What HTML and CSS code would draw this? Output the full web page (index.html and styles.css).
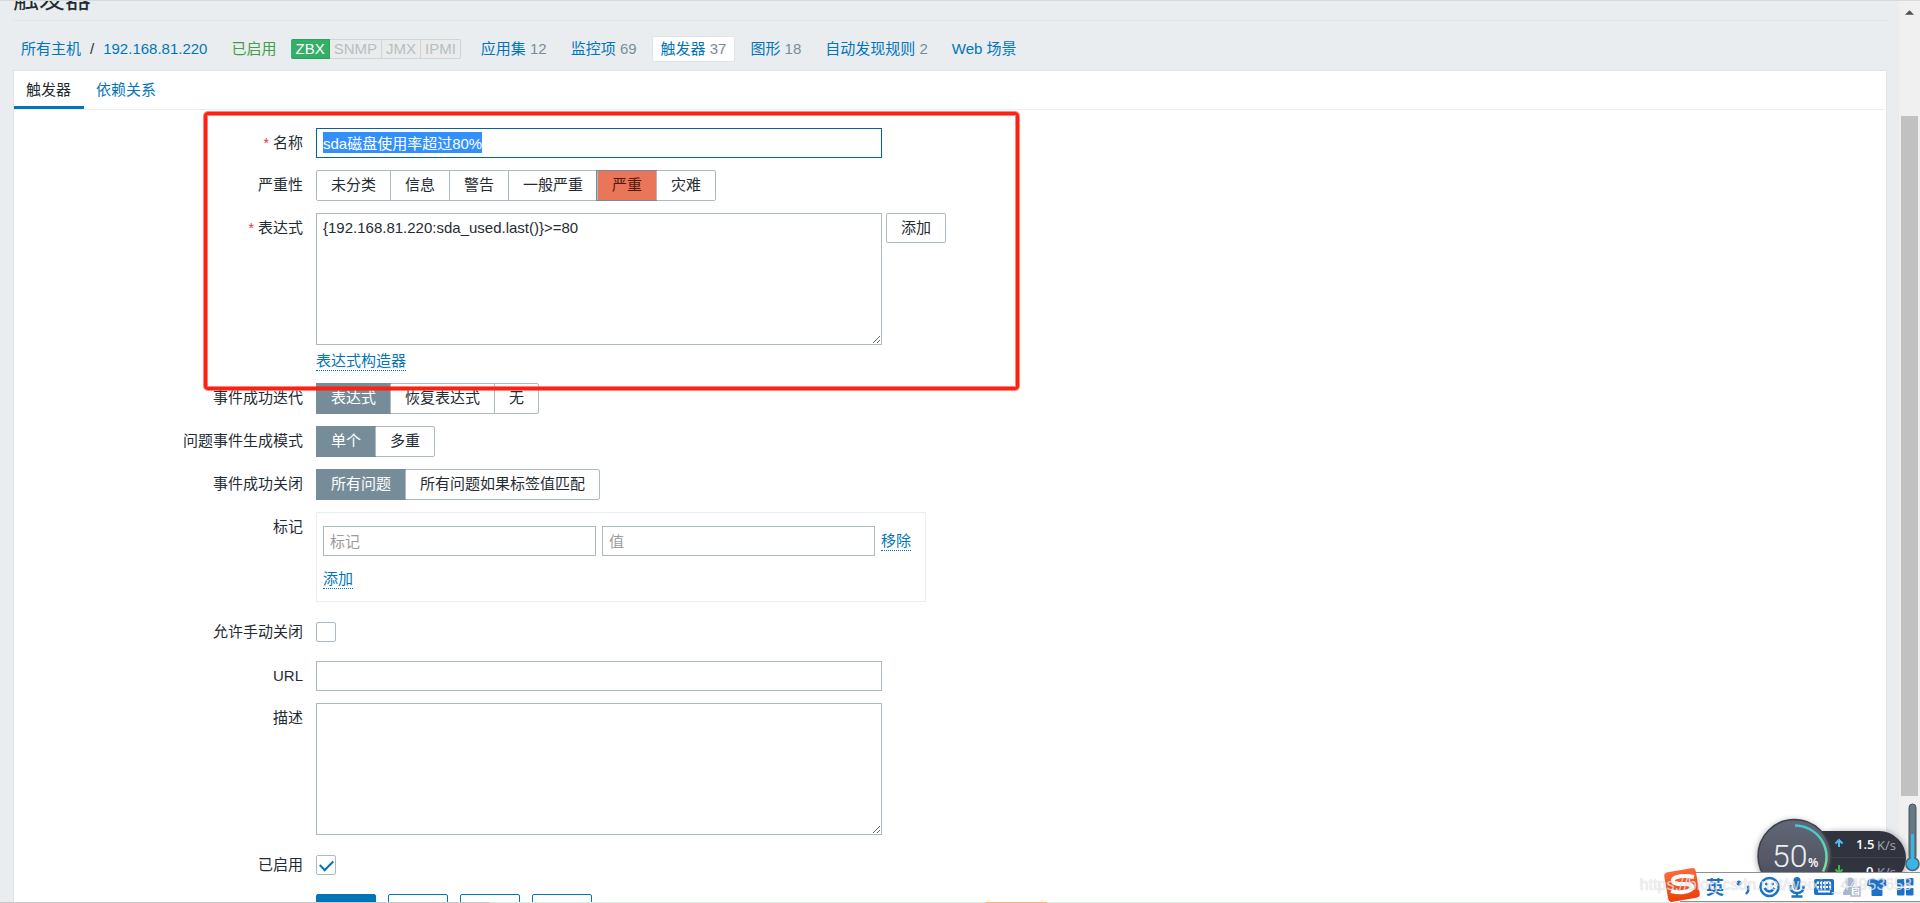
FILE: index.html
```html
<!DOCTYPE html>
<html lang="zh-CN">
<head>
<meta charset="utf-8">
<title>触发器</title>
<link rel="stylesheet" href="styles.css">
</head>
<body>
<div class="page">
  <header class="title-bar"><h1>触发器</h1></header>

  <nav class="host-nav">
    <div class="crumbs"><a href="#">所有主机</a><span>/</span><a href="#">192.168.81.220</a></div>
    <span class="status-on">已启用</span>
    <div class="interfaces"><span class="iface iface-on">ZBX</span><span class="iface">SNMP</span><span class="iface">JMX</span><span class="iface">IPMI</span></div>
    <div class="sections">
      <a class="section" href="#">应用集 <span>12</span></a>
      <a class="section" href="#">监控项 <span>69</span></a>
      <a class="section section-current" href="#">触发器 <span>37</span></a>
      <a class="section" href="#">图形 <span>18</span></a>
      <a class="section" href="#">自动发现规则 <span>2</span></a>
      <a class="section" href="#">Web 场景</a>
    </div>
  </nav>

  <main class="panel">
    <div class="tabs"><a class="tab tab-current" href="#">触发器</a><a class="tab" href="#">依赖关系</a></div>

    <form class="form">
      <div class="row">
        <label class="label" for="name"><span class="req">*</span> 名称</label>
        <input class="text wide name" id="name" type="text" value="sda磁盘使用率超过80%">
      </div>
      <div class="row">
        <span class="label">严重性</span>
        <div class="seg">
          <label class="opt"><input type="radio" name="severity">未分类</label>
          <label class="opt"><input type="radio" name="severity">信息</label>
          <label class="opt"><input type="radio" name="severity">警告</label>
          <label class="opt"><input type="radio" name="severity">一般严重</label>
          <label class="opt opt-high"><input type="radio" name="severity" checked>严重</label>
          <label class="opt"><input type="radio" name="severity">灾难</label>
        </div>
      </div>
      <div class="row">
        <label class="label" for="expression"><span class="req">*</span> 表达式</label>
        <div class="stack">
          <div class="field-line">
            <textarea class="text area wide" id="expression">{192.168.81.220:sda_used.last()}&gt;=80</textarea>
            <button class="btn" type="button">添加</button>
          </div>
          <button class="link" type="button">表达式构造器</button>
        </div>
      </div>
      <div class="row">
        <span class="label">事件成功迭代</span>
        <div class="seg">
          <label class="opt"><input type="radio" name="recovery" checked>表达式</label>
          <label class="opt"><input type="radio" name="recovery">恢复表达式</label>
          <label class="opt"><input type="radio" name="recovery">无</label>
        </div>
      </div>
      <div class="row">
        <span class="label">问题事件生成模式</span>
        <div class="seg">
          <label class="opt"><input type="radio" name="mode" checked>单个</label>
          <label class="opt"><input type="radio" name="mode">多重</label>
        </div>
      </div>
      <div class="row">
        <span class="label">事件成功关闭</span>
        <div class="seg">
          <label class="opt"><input type="radio" name="close" checked>所有问题</label>
          <label class="opt"><input type="radio" name="close">所有问题如果标签值匹配</label>
        </div>
      </div>
      <div class="row">
        <span class="label">标记</span>
        <div class="tags">
          <div class="tag-line">
            <input class="text tag" type="text" placeholder="标记" aria-label="标记">
            <input class="text tag" type="text" placeholder="值" aria-label="值">
            <button class="link" type="button">移除</button>
          </div>
          <button class="link" type="button">添加</button>
        </div>
      </div>
      <div class="row row-check">
        <label class="label" for="manual">允许手动关闭</label>
        <input class="check" id="manual" type="checkbox">
      </div>
      <div class="row">
        <label class="label" for="url">URL</label>
        <input class="text wide" id="url" type="text">
      </div>
      <div class="row">
        <label class="label" for="description">描述</label>
        <textarea class="text area wide" id="description"></textarea>
      </div>
      <div class="row row-check">
        <label class="label" for="enabled">已启用</label>
        <input class="check" id="enabled" type="checkbox" checked>
      </div>
      <div class="row">
        <span class="label"></span>
        <div class="actions">
          <button class="btn act act-main" type="button">更新</button>
          <button class="btn act" type="button">克隆</button>
          <button class="btn act" type="button">删除</button>
          <button class="btn act" type="button">取消</button>
        </div>
      </div>
    </form>
  </main>
</div>

<div class="scrollbar">
  <svg class="scroll-arrow" viewBox="0 0 10 5"><path d="M5 0 10 5H0z"/></svg>
  <div class="thumb"></div>
</div>

<div class="frame"></div>

<svg class="monitor" viewBox="0 0 180 83" role="img" aria-label="50%">
  <defs>
    <linearGradient id="ball" x1="0" y1="0" x2="0" y2="1"><stop offset="0" stop-color="#626777"/><stop offset="1" stop-color="#484c59"/></linearGradient>
    <linearGradient id="arc" x1="0" y1="0" x2="0" y2="1"><stop offset="0" stop-color="#3fc9d6"/><stop offset="1" stop-color="#7fe38c"/></linearGradient>
    <filter id="soft" x="-20%" y="-20%" width="140%" height="140%"><feGaussianBlur stdDeviation="3"/></filter>
  </defs>
  <circle cx="54" cy="57" r="37" fill="#000" opacity=".35" filter="url(#soft)"/>
  <rect x="70" y="31" width="97" height="54" rx="27" fill="#000" opacity=".3" filter="url(#soft)"/>
  <path d="M60 31h79a27 27 0 0 1 0 54H60z" fill="#31343f"/>
  <path d="M80 57.500h86" stroke="#3e424e"/>
  <circle cx="54.500" cy="56" r="36.500" fill="url(#ball)" stroke="#3d404a" stroke-width="1.500"/>
  <path d="M55 25.500a31.500 31.500 0 0 1 28 46" fill="none" stroke="url(#arc)" stroke-width="2.500"/>
  <text x="32" y="67" class="m-big">50</text><text x="68" y="67" class="m-pct">%</text>
  <path d="M99 47v-7M95.500 43.500l3.500-3.500 3.500 3.500" fill="none" stroke="#52b9f2" stroke-width="2"/>
  <path d="M99 65v8M95.500 69.500l3.500 3.500 3.500-3.500" fill="none" stroke="#3cb648" stroke-width="2"/>
  <text x="116" y="49" class="m-num">1.5</text><text x="137" y="50" class="m-unit">K/s</text>
  <text x="126" y="76" class="m-num">0</text><text x="137" y="77" class="m-unit">K/s</text>
  <rect x="169" y="4" width="7" height="56" rx="3.500" fill="#667983" stroke="#44545c"/>
  <circle cx="172.500" cy="64" r="6.500" fill="#35b6e8" stroke="#4d6672" stroke-width="1.500"/>
  <path d="M172.500 34v28" stroke="#35b6e8" stroke-width="3"/>
</svg>

<div class="ime">
  <svg class="ime-icons" viewBox="0 0 256 37">
    <defs><linearGradient id="tile" x1="0" y1="0" x2="0" y2="1"><stop offset="0" stop-color="#fb6a3c"/><stop offset="1" stop-color="#ee3f0a"/></linearGradient></defs>
    <rect x="2" y="5" width="32" height="30" rx="4" fill="url(#tile)" transform="rotate(-10 18 20)"/>
    <path d="M30 12c-9-2-20-1-21 3s5 4 11 4 9 1 8 4-11 6-21 3" fill="none" stroke="#fff" stroke-width="4"/>
    <text x="42" y="29" class="ime-zh">英</text>
    <circle cx="75" cy="18" r="2.500" fill="#1b72c9"/>
    <path d="M83.500 21q3 3-1.500 8" fill="none" stroke="#1b72c9" stroke-width="2.500"/>
    <g fill="none" stroke="#1b72c9" stroke-width="2.500">
      <circle cx="105.500" cy="22" r="9"/><path d="M100.500 23q5 7 10 0"/>
      <path d="M126.500 20v2q0 6 6.500 6t6.500-6v-2M133 28v4M127.500 31.500h11"/>
    </g>
    <g fill="#1b72c9">
      <circle cx="102.500" cy="19" r="1.500"/><circle cx="108.500" cy="19" r="1.500"/>
      <rect x="129.500" y="12" width="7" height="13" rx="3.500"/>
      <rect x="150" y="14" width="20" height="16" rx="2"/>
      <path d="M209 13q4 4 8 0l5 2 1 5.500-4.500 1.500v8q0 1-1 1h-9q-1 0-1-1v-8L203 20.500 204 15z"/>
      <rect x="233" y="14" width="7.500" height="7.500" rx="1"/><rect x="242" y="13" width="7.500" height="7.500" rx="1"/><rect x="233" y="23" width="7.500" height="7.500" rx="1"/><rect x="242" y="23" width="7.500" height="7.500" rx="1"/>
    </g>
    <path d="M153 18h14M153 22h14" stroke="#fff" stroke-width="2" stroke-dasharray="2 1"/><path d="M154 26.500h12" stroke="#fff" stroke-width="2"/>
    <g fill="#a9b6d3"><circle cx="186" cy="17" r="4.500"/><path d="M179 30q0-8 7-8t7 8z"/></g>
    <rect x="187" y="22" width="9" height="9" fill="#fff" stroke="#a9b6d3" stroke-width="1.500"/><path d="M189 24.500h5v2h-4v2.500h4" fill="none" stroke="#a9b6d3"/>
  </svg>
</div>
<div class="watermark">https://blog.csdn.net/weixin_44953658</div>
<div class="edge"></div>

<script src="script.js"></script>
</body>
</html>
```
FILE: styles.css
```css
* { box-sizing: border-box; }

html, body { height: 100%; }

body {
  margin: 0;
  overflow: hidden;
  position: relative;
  background: #e9edf0;
  border-top: 1px solid #d5dade;
  color: #1f2c33;
  font: 15px/20px "Liberation Sans", "Noto Sans CJK SC", sans-serif;
  display: flex;
}

input, textarea, button { font: inherit; color: inherit; margin: 0; }

a { color: #0275b8; text-decoration: none; }

.page {
  flex: 1;
  min-width: 0;
  padding: 0 12px 0 13px;
}

/* header */
.title-bar {
  height: 20px;
  padding-bottom: 6px;
  border-bottom: 1px solid #dfe4e7;
  overflow: hidden;
  display: flex;
  align-items: flex-end;
}
.title-bar h1 { margin: 0; font-size: 26px; font-weight: 400; line-height: 30px; }

.host-nav {
  display: flex;
  align-items: center;
  height: 49px;
  padding: 7px 0 0 8px;
}
.crumbs { display: flex; gap: 9px; }
.status-on { margin: 0 15px 0 24px; color: #429e47; }

.interfaces { display: flex; line-height: 18px; }
.iface {
  padding: 0 4px;
  border: 1px solid #ccd5d9;
  border-left: 0;
  background: #ebebeb;
  color: #b4bfc5;
}
.iface:last-child { border-radius: 0 2px 2px 0; }
.iface-on {
  background: #34af67;
  border-color: #2f9f5e;
  color: #fff;
  border-radius: 2px 0 0 2px;
}

.sections { display: flex; margin-left: 11px; gap: 6px; }
.section { padding: 2px 8px; border: 1px solid transparent; border-radius: 2px; }
.section span { color: #768d99; }
.section-current { background: #fff; border-color: #dfe4e7; }

/* panel */
.panel {
  background: #fff;
  border: 1px solid #dfe4e7;
}
.tabs {
  display: flex;
  margin-right: 1px;
  border-bottom: 1px solid #ebeef0;
}
.tab { padding: 9px 13px 6px 12px; border-bottom: 3px solid transparent; }
.tab-current { color: #1f2c33; border-color: #0275b8; }

.form {
  display: flex;
  flex-direction: column;
  gap: 12px;
  padding: 18px 0 0;
}
.row { display: flex; align-items: flex-start; }
.row-check { align-items: center; height: 35px; padding-top: 1px; }
.label {
  width: 289px;
  margin-right: 13px;
  text-align: right;
  line-height: 30px;
  flex: none;
}
.req { color: #e33734; font-size: 14px; }

.text {
  height: 30px;
  padding: 0 6px;
  border: 1px solid #acbbc2;
  border-radius: 0;
  background: #fff;
  outline: none;
  display: block;
}
.wide { width: 566px; }
.name { padding-bottom: 1px; }
.name:focus { border-color: #0064a0; }
.name::selection { background: rgba(48, 142, 254, .99); color: #fff; }
.area { height: 132px; padding: 4px 6px; resize: both; line-height: 20px; }
.text::placeholder { color: #9b9b9b; opacity: 1; }

.seg {
  display: flex;
  border: 1px solid #acbbc2;
  border-radius: 2px;
}
.opt {
  position: relative;
  padding: 0 14px 2px;
  line-height: 27px;
}
.opt + .opt { border-left: 1px solid #acbbc2; }
.opt input { position: absolute; opacity: 0; }
.opt:has(:checked) { background: #768d99; color: #fff; box-shadow: 0 0 0 1px #768d99; }
.opt-high:has(:checked) { background: #e97659; color: #52190b; }

.stack { display: flex; flex-direction: column; align-items: flex-start; gap: 6px; }
.field-line { display: flex; align-items: flex-start; gap: 4px; }

.btn {
  width: 60px;
  height: 30px;
  padding: 0;
  background: #fff;
  border: 1px solid #acbbc2;
  border-radius: 2px;
}
.link {
  padding: 0;
  border: 0;
  border-bottom: 1px dotted #0275b8;
  background: none;
  color: #0275b8;
  line-height: 19px;
}

.tags {
  display: flex;
  flex-direction: column;
  align-items: flex-start;
  gap: 13px;
  width: 610px;
  padding: 13px 6px 12px;
  border: 1px solid #ebeef0;
}
.tag-line { display: flex; align-items: center; gap: 6px; }
.tag { width: 273px; }

.check {
  appearance: none;
  width: 20px;
  height: 20px;
  border: 1px solid #acbbc2;
  border-radius: 2px;
  background: #fff;
  display: grid;
  place-items: center;
}
.check:checked::before {
  content: "";
  width: 11px;
  height: 6px;
  margin-bottom: 3px;
  border: solid #0275b8;
  border-width: 0 0 2px 2px;
  transform: rotate(-45deg);
}

.actions { display: flex; gap: 12px; }
.act { height: 34px; padding-top: 4px; border-color: #0275b8; color: #0275b8; }
.act-main { background: #0275b8; color: #fff; }

/* scrollbar */
.scrollbar {
  width: 21px;
  flex: none;
  padding: 9px 2px 107px;
  background: #f0f0f0;
  display: flex;
  flex-direction: column;
  align-items: center;
  gap: 101px;
}
.scroll-arrow { width: 9px; height: 5px; fill: #505050; flex: none; }
.thumb { width: 17px; flex: 1; background: #c1c1c1; }

/* overlays */
.frame {
  position: absolute;
  left: 204px;
  top: 111px;
  width: 815px;
  height: 278px;
  border: 3px solid #ff2012;
  border-radius: 4px;
  box-shadow: 0 0 0 1px rgba(255, 32, 18, .55), inset 0 0 0 1px rgba(255, 32, 18, .55);
}
.monitor { position: absolute; right: 0; bottom: 20px; width: 180px; height: 83px; }
.monitor text { font-family: "Open Sans", sans-serif; fill: #fff; }
.monitor .m-big { font-family: Roboto, sans-serif; font-size: 32px; font-weight: 300; fill: #eceef2; }
.monitor .m-pct { font-size: 12px; font-weight: 600; }
.monitor .m-num { font-size: 13px; font-weight: 600; }
.monitor .m-unit { font-size: 13px; fill: #a9abb3; }

.ime {
  position: absolute;
  right: 0;
  bottom: 1px;
  width: 240px;
  height: 30px;
  background: #fff;
  border: solid #8d9194;
  border-width: 1px 0;
}
.ime-icons { position: absolute; right: 0; bottom: -1px; width: 256px; height: 37px; }
.ime-zh { font: 700 18px "Noto Sans CJK SC", sans-serif; fill: #1b72c9; }

.watermark {
  position: absolute;
  right: 8px;
  bottom: 8px;
  font-size: 16px;
  color: rgba(255, 255, 255, .7);
  text-shadow: 0 0 1px rgba(120, 120, 120, .45);
}

.edge {
  position: absolute;
  left: 0;
  right: 0;
  bottom: 0;
  height: 1px;
  background: linear-gradient(90deg, #c9c9c9 490px, #dcebe2 490px, #dcebe2 986px, #f6b57c 986px, #f6b57c 1047px, #dcebe2 1047px);
}
```
FILE: script.js
```js
const nameField = document.getElementById('name');
nameField.focus();
nameField.select();
```
